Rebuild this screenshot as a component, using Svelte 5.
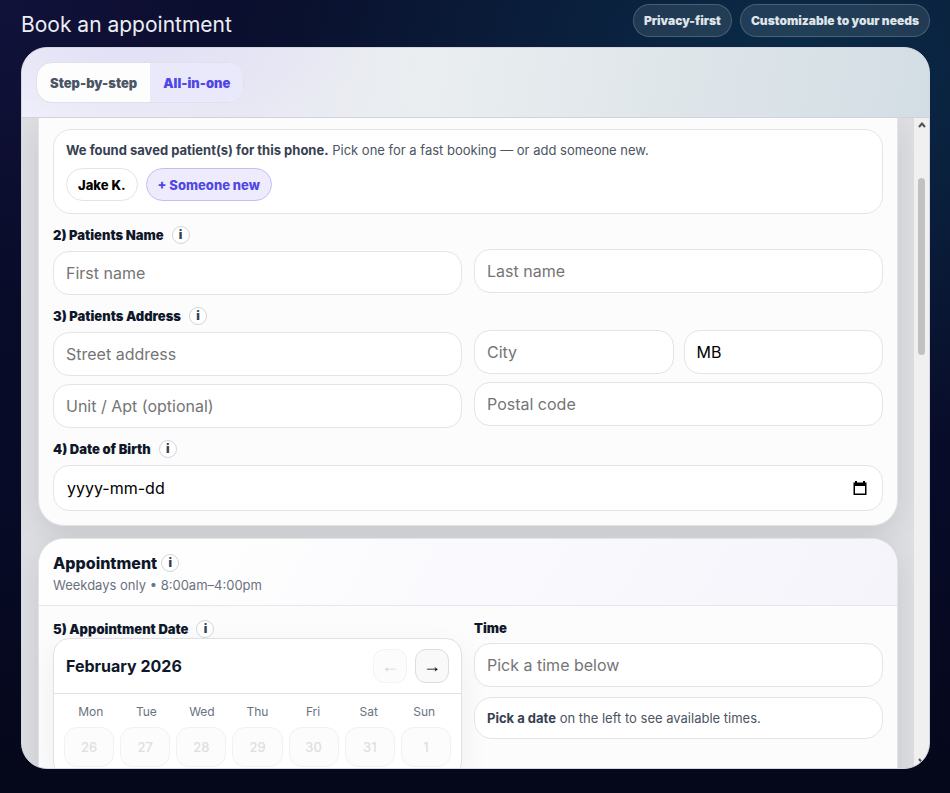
<script lang="ts">
  const weekdays = ['Mon', 'Tue', 'Wed', 'Thu', 'Fri', 'Sat', 'Sun'];
  const days = [26, 27, 28, 29, 30, 31, 1];
  const modes = ['Step-by-step', 'All-in-one'];

  let mode = $state('All-in-one');
  let firstName = $state('');
  let lastName = $state('');
  let street = $state('');
  let unit = $state('');
  let city = $state('');
  let province = $state('MB');
  let postal = $state('');
  let dob = $state('');
</script>

{#snippet info(topic: string)}
  <button class="info" type="button" aria-label="About {topic}">i</button>
{/snippet}

<div class="page">
  <header class="top">
    <h1>Book an appointment</h1>
    <div class="badges">
      <span class="badge">Privacy-first</span>
      <span class="badge">Customizable to your needs</span>
    </div>
  </header>

  <main class="modal">
    <div class="modal-head">
      <div class="tabs">
        {#each modes as m (m)}
          <button type="button" class="tab" class:active={mode === m} onclick={() => (mode = m)}>{m}</button>
        {/each}
      </div>
    </div>

    <div class="body">
      <form class="scroll">
        <section class="card patient">
          <div class="saved">
            <p><strong>We found saved patient(s) for this phone.</strong> Pick one for a fast booking — or add someone new.</p>
            <div class="pills">
              <button type="button" class="pill">Jake K.</button>
              <button type="button" class="pill new">+ Someone new</button>
            </div>
          </div>

          <div class="grid">
            <div>
              <div class="label-row"><label for="first">2) Patients Name</label>{@render info('the name')}</div>
              <input id="first" type="text" placeholder="First name" bind:value={firstName} />
            </div>
            <div>
              <div class="label-space"></div>
              <input type="text" aria-label="Last name" placeholder="Last name" bind:value={lastName} />
            </div>
          </div>

          <div class="grid">
            <div>
              <div class="label-row"><label for="street">3) Patients Address</label>{@render info('the address')}</div>
              <div class="stack">
                <input id="street" type="text" placeholder="Street address" bind:value={street} />
                <input type="text" aria-label="Unit" placeholder="Unit / Apt (optional)" bind:value={unit} />
              </div>
            </div>
            <div>
              <div class="label-space"></div>
              <div class="stack">
                <div class="pair">
                  <input type="text" aria-label="City" placeholder="City" bind:value={city} />
                  <input type="text" aria-label="Province" bind:value={province} />
                </div>
                <input type="text" aria-label="Postal code" placeholder="Postal code" bind:value={postal} />
              </div>
            </div>
          </div>

          <div>
            <div class="label-row"><label for="dob">4) Date of Birth</label>{@render info('the date of birth')}</div>
            <div class="date">
              <input id="dob" type="text" placeholder="yyyy-mm-dd" bind:value={dob} />
              <button type="button" class="picker" aria-label="Open calendar">
                <svg viewBox="0 0 14 15" width="14" height="15">
                  <path d="M2 0h2v1.500h6V0h2v1.500h1.500V14H.5V1.500H2zM2 5v7.500h10V5z" fill="#000" fill-rule="evenodd" />
                </svg>
              </button>
            </div>
          </div>
        </section>

        <section class="card">
          <div class="card-head">
            <div class="card-title"><h2>Appointment</h2>{@render info('appointments')}</div>
            <p>Weekdays only • 8:00am–4:00pm</p>
          </div>
          <div class="card-body grid">
            <div>
              <div class="label-row tight"><span class="label">5) Appointment Date</span>{@render info('the appointment date')}</div>
              <div class="calendar">
                <div class="cal-head">
                  <strong>February 2026</strong>
                  <div class="cal-nav">
                    <button type="button" aria-label="Previous month" disabled>←</button>
                    <button type="button" aria-label="Next month">→</button>
                  </div>
                </div>
                <div class="weekdays">
                  {#each weekdays as d (d)}<span>{d}</span>{/each}
                </div>
                <div class="days">
                  {#each days as d (d)}<button type="button" disabled>{d}</button>{/each}
                </div>
              </div>
            </div>
            <div>
              <label class="time-label" for="time">Time</label>
              <input id="time" type="text" placeholder="Pick a time below" readonly />
              <p class="notice"><strong>Pick a date</strong> on the left to see available times.</p>
            </div>
          </div>
        </section>
      </form>

      <div class="scrollbar" aria-hidden="true">
        <svg viewBox="0 0 8 6" width="8" height="6"><path d="M1 5l3-3.500L7 5" /></svg>
        <div class="track"><div class="thumb"></div></div>
        <svg viewBox="0 0 8 6" width="8" height="6"><path d="M1 1l3 3.500L7 1" /></svg>
      </div>
    </div>
  </main>
</div>

<style>
  :global(body) { margin: 0; background: #060820; }
  .page, .page * { box-sizing: border-box; }
  .page {
    height: 100vh; padding: 0 20px 24px 21px; overflow: hidden;
    display: flex; flex-direction: column;
    font-family: Inter, "Liberation Sans", sans-serif; color: #0f172a;
    background:
      radial-gradient(600px 400px at 84% 60px, #0a2c48, transparent 100%),
      radial-gradient(300px 300px at 0 0, #11123a, transparent 100%),
      linear-gradient(#0a0c2a, #080b28 60%, #05071a);
  }
  h1, h2, p { margin: 0; }
  button, input { font: inherit; color: inherit; margin: 0; }
  button { cursor: pointer; padding: 0; }

  .top { height: 47px; flex-shrink: 0; display: flex; justify-content: space-between; align-items: flex-start; }
  h1 { font-size: 21px; line-height: 49px; font-weight: 400; color: #eceef5; }
  .badges { display: flex; gap: 8px; padding-top: 4px; }
  .badge {
    height: 33px; line-height: 31px; padding: 0 10px; border-radius: 17px;
    border: 1px solid rgba(255, 255, 255, 0.18); background: rgba(255, 255, 255, 0.1);
    color: #dfe4ea; font-size: 12px; font-weight: 900;
  }

  .modal {
    flex: 1; min-height: 0; display: flex; flex-direction: column; overflow: hidden;
    border: 1px solid #d5d6e2; border-radius: 26px; background: #dddfe3;
  }
  .modal-head {
    padding: 14px; border-bottom: 1px solid #d0d3de; flex-shrink: 0;
    background:
      radial-gradient(240px 90px at 12% 0, #e1e0f5, transparent 100%),
      linear-gradient(100deg, #f2f1fb 0%, #e9e9f4 25%, #eaeef0 45%, #dbe3e8 80%, #d3dee4 100%);
  }
  .tabs {
    display: inline-flex; vertical-align: top; height: 41px; overflow: hidden;
    border: 1px solid #dfe0e8; border-radius: 16px; background: #fdfdfe;
  }
  .tab { border: none; background: none; padding: 0 13px; font-size: 13px; font-weight: 900; color: #4b5563; }
  .tab.active { background: #eae8fb; color: #4f46e5; }

  .body { flex: 1; min-height: 0; display: flex; }
  .scroll { flex: 1; min-width: 0; overflow: hidden; padding: 0 16px; display: flex; flex-direction: column; gap: 12px; }
  .card {
    flex-shrink: 0; border: 1px solid #e4e4e8; border-radius: 26px; background: #fcfcfc;
    box-shadow: 0 10px 30px rgba(0, 0, 0, 0.1);
  }
  .patient {
    border-top: none; border-radius: 0 0 26px 26px; padding: 11px 14px 14px;
    display: flex; flex-direction: column; gap: 12px;
  }
  .saved { border: 1px solid #e3e4e6; border-radius: 18px; background: #fff; padding: 11px 12px 12px; }
  .saved p { font-size: 13px; line-height: 18px; color: #4b5563; }
  .saved strong, .notice strong { font-weight: 700; color: #374151; }
  .pills { display: flex; gap: 8px; margin-top: 9px; }
  .pill {
    height: 33px; padding: 0 11px; border: 1px solid #e3e4e6; border-radius: 17px;
    background: #fff; color: #000; font-size: 13px; line-height: 30px; font-weight: 800;
  }
  .pill.new { border-color: #c3bdf5; background: #edebfc; color: #4f46e5; }

  .grid { display: grid; grid-template-columns: 1fr 1fr; gap: 12px; }
  .grid > div { min-width: 0; }
  .label-row { display: flex; align-items: center; gap: 8px; height: 18px; margin-bottom: 7px; }
  .label-row.tight { margin-bottom: 0; }
  .label-row label, .label, .time-label { font-size: 13px; font-weight: 900; color: #0f172a; }
  .label-space { height: 17px; margin-bottom: 6px; }
  .time-label { display: block; line-height: 17px; margin-bottom: 6px; }
  .info {
    width: 18px; height: 18px; border: 1px solid #d3d5da; border-radius: 50%;
    background: #fff; color: #374151; font-size: 12px; line-height: 16px; font-weight: 900;
  }
  .stack { display: flex; flex-direction: column; gap: 8px; }
  .pair { display: grid; grid-template-columns: 1fr 1fr; gap: 10px; }
  input {
    display: block; width: 100%; height: 44px; padding: 0 12px; font-size: 16px; color: #000;
    border: 1px solid #e3e4e6; border-radius: 16px; background: #fff; outline: none;
  }
  input::placeholder { color: #757575; opacity: 1; }
  input:focus { border-color: #4f46e5; }
  .date {
    display: flex; align-items: center; height: 46px; padding-right: 15px;
    border: 1px solid #e3e4e6; border-radius: 16px; background: #fff;
  }
  .date input { border: none; background: none; padding-left: 13px; }
  .date input::placeholder { color: #000; }
  .picker { border: none; background: none; display: flex; }

  .card-head {
    padding: 14px 14px 11px; border-bottom: 1px solid #e6e6ec; border-radius: 25px 25px 0 0;
    background: linear-gradient(120deg, #fefefe 20%, #f9f9fe 55%, #f4f4fa 100%);
  }
  .card-title { display: flex; align-items: center; gap: 4px; height: 20px; }
  h2 { font-size: 16px; font-weight: 800; line-height: 20px; }
  .card-head p { margin-top: 3px; font-size: 13px; line-height: 18px; color: #6b7280; }
  .card-body { padding: 14px; }
  .calendar { border: 1px solid #e0e1e4; border-radius: 16px; background: #fff; box-shadow: 0 10px 30px rgba(15, 23, 42, 0.06); }
  .cal-head { display: flex; justify-content: space-between; align-items: center; padding: 10px 12px; border-bottom: 1px solid #e0e1e4; }
  .cal-head strong { font-size: 16px; font-weight: 700; }
  .cal-nav { display: flex; gap: 8px; }
  .cal-nav button {
    width: 34px; height: 34px; border: 1px solid #dcdde0; border-radius: 11px;
    background: #f9f9f9; color: #000; font-family: "Liberation Sans", sans-serif; font-size: 18px;
  }
  .cal-nav button:disabled { opacity: 0.35; color: #888; cursor: default; }
  .weekdays, .days { display: grid; grid-template-columns: repeat(7, 1fr); gap: 6px; }
  .weekdays { padding: 10px 12px 7px; font-size: 12px; line-height: 16px; text-align: center; color: #6b7280; }
  .days { padding: 0 10px 10px; }
  .days button {
    height: 40px; border: 1px solid #f1f1f2; border-radius: 13px;
    background: #fcfcfc; color: #dedfe0; font-size: 13px; font-weight: 500;
  }
  .notice {
    margin-top: 10px; height: 42px; padding: 0 12px; line-height: 40px; font-size: 13px; color: #4b5563;
    border: 1px solid #e3e4e6; border-radius: 18px; background: #fff;
  }

  .scrollbar {
    width: 15px; flex-shrink: 0; padding: 4px 0; background: #f0f0f0;
    display: flex; flex-direction: column; align-items: center;
  }
  .scrollbar path { fill: none; stroke: #505050; stroke-width: 2; }
  .track { flex: 1; padding-top: 50px; }
  .thumb { width: 7px; height: 28%; min-height: 177px; border-radius: 4px; background: #c1c1c1; }
</style>
